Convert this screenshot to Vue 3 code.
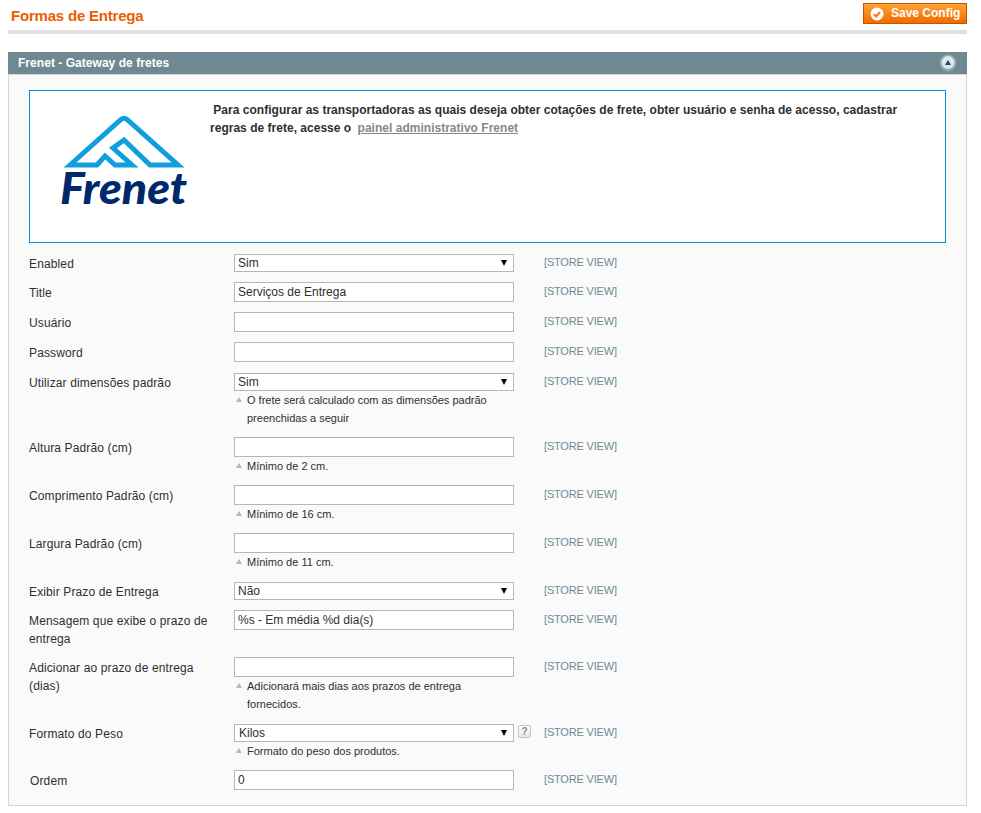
<template>
  <div class="page">
    <div class="content-header">
      <h3 class="page-title">Formas de Entrega</h3>
      <button class="save-btn" type="button">
        <svg class="save-icon" width="14" height="14" viewBox="0 0 14 14">
          <circle cx="7" cy="7" r="6.5" fill="#fff" />
          <path d="M4 7.2 6.2 9.4 10 4.9" fill="none" stroke="#f07a0c" stroke-width="2" />
        </svg>
        <span>Save Config</span>
      </button>
    </div>

    <div class="section-head">
      <span>Frenet - Gateway de fretes</span>
      <svg width="18" height="18" viewBox="0 0 18 18">
        <circle cx="9" cy="9" r="8.5" fill="#9fb2b9" opacity="0.7" />
        <circle cx="9" cy="8.5" r="6.5" fill="#dfe8eb" />
        <path d="M6 11 9 6 12 11Z" fill="#1d4d63" />
      </svg>
    </div>

    <div class="fieldset">
      <div class="banner">
        <svg class="logo" width="140" height="115" viewBox="55 108 140 115">
          <path
            d="M70 165 121 119.5Q124 117 127 119.5L178 165H150L124 140 113 148 132 165H115L105 156 97 165Z"
            fill="none"
            stroke="#0fa0dc"
            stroke-width="5"
          />
          <text x="60" y="204" class="logo-word" textLength="127" lengthAdjust="spacingAndGlyphs">Frenet</text>
        </svg>
        <p class="banner-text">
          &nbsp;Para configurar as transportadoras as quais deseja obter cotações de frete, obter usuário e senha de acesso, cadastrar
          regras de frete, acesse o <a href="#" class="banner-link">painel administrativo Frenet</a>
        </p>
      </div>

      <div v-for="row in rows" :key="row.label" class="row">
        <label class="row-label" :class="{ indented: row.label === 'Ordem' }">{{ row.label }}</label>
        <div class="row-value">
          <div v-if="row.options" class="select-wrap">
            <select class="field select" :class="{ kilos: row.help }">
              <option v-for="option in row.options" :key="option">{{ option }}</option>
            </select>
            <span class="select-arrow"></span>
          </div>
          <input v-else class="field" type="text" :value="row.value || ''" />
          <p v-if="row.note" class="note">{{ row.note }}</p>
        </div>
        <div class="row-help">
          <span v-if="row.help" class="help-btn">?</span>
        </div>
        <div class="row-scope">[STORE VIEW]</div>
      </div>
    </div>
  </div>
</template>

<script setup>
const rows = [
  { label: 'Enabled', options: ['Sim'] },
  { label: 'Title', value: 'Serviços de Entrega' },
  { label: 'Usuário' },
  { label: 'Password' },
  {
    label: 'Utilizar dimensões padrão',
    options: ['Sim'],
    note: 'O frete será calculado com as dimensões padrão preenchidas a seguir'
  },
  { label: 'Altura Padrão (cm)', note: 'Mínimo de 2 cm.' },
  { label: 'Comprimento Padrão (cm)', note: 'Mínimo de 16 cm.' },
  { label: 'Largura Padrão (cm)', note: 'Mínimo de 11 cm.' },
  { label: 'Exibir Prazo de Entrega', options: ['Não'] },
  { label: 'Mensagem que exibe o prazo de entrega', value: '%s - Em média %d dia(s)' },
  {
    label: 'Adicionar ao prazo de entrega (dias)',
    note: 'Adicionará mais dias aos prazos de entrega fornecidos.'
  },
  { label: 'Formato do Peso', options: ['Kilos'], help: true, note: 'Formato do peso dos produtos.' },
  { label: 'Ordem', value: '0' }
];
</script>

<style>
body {
  background: #fff;
}
</style>

<style scoped>
.page {
  margin: 0 14px 0 8px;
  font-family: "Liberation Sans", Arial, sans-serif;
  font-size: 12px;
  color: #2f2f2f;
}

.content-header {
  display: flex;
  justify-content: space-between;
  align-items: flex-start;
  height: 30px;
  padding-top: 3px;
  box-sizing: border-box;
}

.page-title {
  margin: 4px 0 0 3px;
  font-size: 15px;
  line-height: 18px;
  font-weight: bold;
  letter-spacing: -0.2px;
  color: #eb5e00;
}

.save-btn {
  display: flex;
  align-items: center;
  width: 104px;
  height: 21px;
  padding: 0 0 2px 6px;
  border: 1px solid #c25500;
  background: linear-gradient(#ffa334, #f16a00);
  color: #fff;
  font-family: inherit;
  font-size: 12px;
  font-weight: bold;
  cursor: pointer;
}

.save-icon {
  margin: 2px 7px 0 0;
}

.section-head {
  display: flex;
  justify-content: space-between;
  align-items: center;
  height: 22px;
  margin-top: 22px;
  padding: 0 10px;
  background: #6f8992;
  color: #fff;
  font-weight: bold;
  letter-spacing: 0.04px;
  position: relative;
}

.section-head::before {
  content: "";
  position: absolute;
  left: 0;
  right: 0;
  top: -22px;
  height: 4px;
  background: #dfdfdf;
}

.fieldset {
  padding: 15px 20px 15px;
  border: 1px solid #d6d6d6;
  background: #fafafa;
}

.banner {
  display: flex;
  height: 153px;
  margin-bottom: 10px;
  box-sizing: border-box;
  border: 1px solid #0095da;
  background: #fff;
}

.logo {
  flex: none;
  margin: 17px 0 0 25px;
}

.logo-word {
  font-family: Lato, sans-serif;
  font-size: 43px;
  font-weight: 900;
  font-style: italic;
  fill: #00296b;
}

.banner-text {
  margin: 10px 20px 0 15px;
  line-height: 18px;
  font-weight: bold;
  letter-spacing: 0.018px;
}

.banner-link {
  margin-left: 3px;
  color: #888;
}

.row {
  display: grid;
  grid-template-columns: 205px 280px 30px 1fr;
  margin-bottom: 10px;
}

.row:last-child {
  margin-bottom: 0;
}

.row-label {
  margin-bottom: -1px;
  padding: 2px 20px 0 0;
  line-height: 18px;
  letter-spacing: 0.13px;
}

.row-label.indented {
  padding-left: 1px;
}

.row-value {
  min-width: 0;
}

.field {
  display: block;
  width: 280px;
  height: 20px;
  padding: 0 3px;
  box-sizing: border-box;
  border: 1px solid #b6b6b6;
  border-radius: 0;
  background: #fff;
  color: #2f2f2f;
  font-family: inherit;
  font-size: 12px;
  outline: none;
}

.select-wrap {
  position: relative;
  margin-top: 1px;
}

.select {
  height: 18px;
  padding: 0 3px;
  appearance: none;
  line-height: 16px;
}

.select.kilos {
  padding-left: 4px;
}

.select-arrow {
  position: absolute;
  right: 7px;
  top: 6px;
  border-style: solid;
  border-width: 6px 3.5px 0;
  border-color: #000 transparent transparent;
}

.note {
  position: relative;
  margin: 0;
  padding: 0 10px 0 13px;
  font-size: 11px;
  line-height: 18px;
  color: #2f2f2f;
}

.note::before {
  content: "";
  position: absolute;
  left: 2px;
  top: 6px;
  border-style: solid;
  border-width: 0 3.5px 5px;
  border-color: transparent transparent #a9bcc4;
}

.row-help {
  padding: 2px 0 0 4px;
}

.help-btn {
  display: block;
  width: 13px;
  height: 13px;
  box-sizing: border-box;
  border: 1px solid #c4c4c4;
  border-radius: 2px;
  background: linear-gradient(#fff, #e6e6e6);
  color: #888;
  font-size: 10px;
  font-weight: bold;
  line-height: 11px;
  text-align: center;
}

.row-scope {
  font-size: 11px;
  line-height: 18px;
  letter-spacing: -0.18px;
  color: #6e8a96;
}
</style>
